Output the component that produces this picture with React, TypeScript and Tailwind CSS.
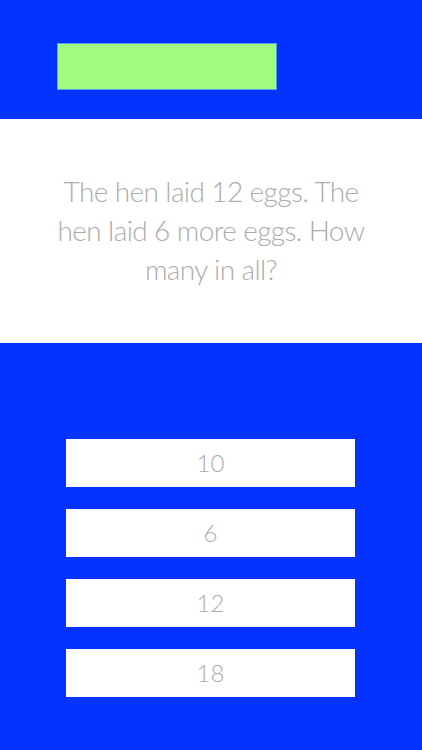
import React from 'react';

const answers = ['10', '6', '12', '18'];

const App = () => {
  return (
    <div className="w-[422px] h-[750px] flex flex-col bg-[#0433ff] font-['Lato','Open_Sans',sans-serif] font-light">
      {/* Header with progress bar */}
      <div className="h-[119px] pt-[43px] pl-[57px]">
        <div className="w-[220px] h-[47px] bg-[#a0fc7f] border border-[#5a9cf0]" />
      </div>

      {/* Question */}
      <div className="h-[224px] bg-white flex items-center justify-center px-[20px]">
        <p className="text-center text-[28px] leading-[39px] text-[#acacac] tracking-[-0.6px] mt-[-2px]">
          The hen laid 12 eggs. The
          <br />
          hen laid 6 more eggs. How
          <br />
          many in all?
        </p>
      </div>

      {/* Answers */}
      <div className="flex flex-col items-center gap-[22px] pt-[96px] pr-[1px]">
        {answers.map((a) => (
          <button
            key={a}
            className="w-[289px] h-[48px] bg-white flex items-center justify-center text-[24px] text-[#acacac] font-light"
          >
            {a}
          </button>
        ))}
      </div>
    </div>
  );
};

export default App;
